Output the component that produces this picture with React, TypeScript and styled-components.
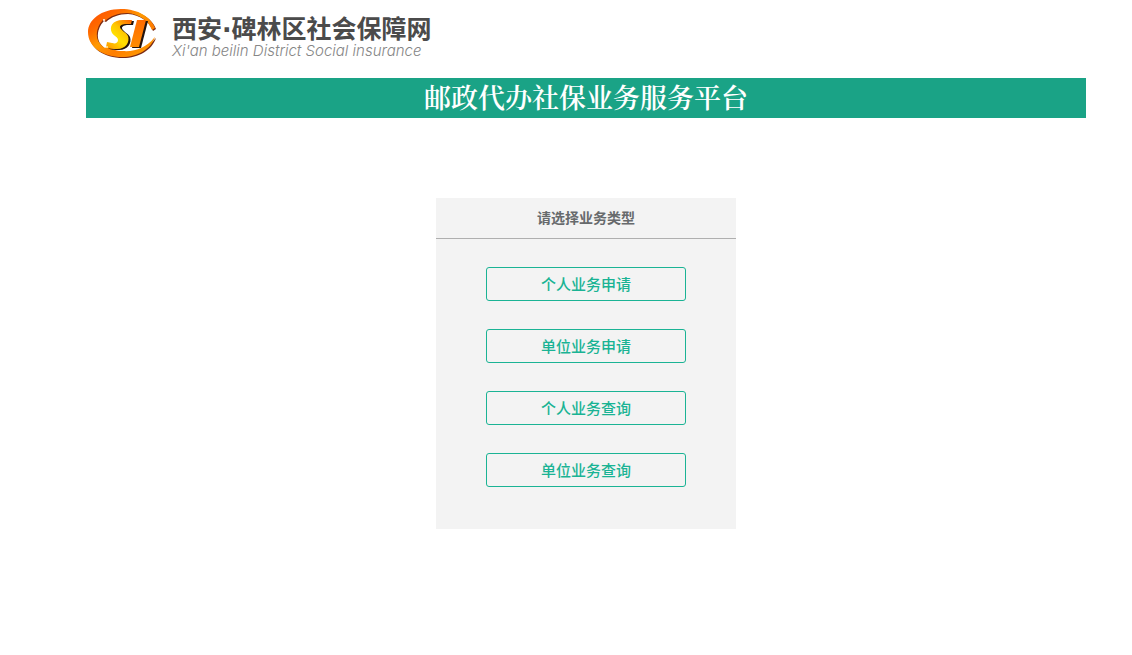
import React from "react";
import styled, { createGlobalStyle } from "styled-components";

const GlobalStyle = createGlobalStyle`
  *, *::before, *::after { box-sizing: border-box; }
  body {
    margin: 0;
    background: #fff;
    font-family: "Liberation Sans", "Noto Sans CJK SC", sans-serif;
  }
  h1, h2, p, ul { margin: 0; padding: 0; }
`;

const Page = styled.div`
  padding: 0 46px 40px 86px;
`;

const Header = styled.header`
  display: flex;
  height: 78px;
  padding: 6px 0 0;
`;

const Brand = styled.a`
  display: flex;
  align-items: flex-start;
  gap: 14px;
  color: #4b4b4b;
  text-decoration: none;
`;

const Emblem = styled.svg`
  display: block;
  width: 72px;
  height: 56px;
`;

const BrandText = styled.span`
  display: flex;
  flex-direction: column;
  padding-top: 10px;
  white-space: nowrap;
`;

const BrandName = styled.span`
  font: 700 25px/28px "DejaVu Sans", "Noto Sans CJK SC", sans-serif;
`;

const BrandLatin = styled.span`
  color: #868686;
  font: italic 300 15px/14px Inter, sans-serif;
  font-feature-settings: "cv11";
`;

const Banner = styled.h1`
  padding-top: 2px;
  background: #1aa386;
  color: #fff;
  font: 600 27px/38px "Liberation Serif", "Noto Serif CJK SC", "Noto Sans CJK SC", serif;
  text-align: center;
`;

const Panel = styled.section`
  width: 300px;
  margin: 80px auto 0;
  padding-bottom: 42px;
  background: #f3f3f3;
`;

const PanelTitle = styled.h2`
  padding-bottom: 2px;
  border-bottom: 1px solid #afafaf;
  color: #676a6c;
  font: 700 14px/38px "Noto Sans CJK SC", sans-serif;
  text-align: center;
`;

const Choices = styled.div`
  display: flex;
  flex-direction: column;
  gap: 28px;
  padding: 28px 50px 0;
`;

const Choice = styled.button`
  height: 34px;
  padding: 0;
  border: 1px solid #1ab394;
  border-radius: 3px;
  background: transparent;
  color: #1ab394;
  font: 500 15px/32px "Noto Sans CJK SC", sans-serif;
  cursor: pointer;
`;

const choices = ["个人业务申请", "单位业务申请", "个人业务查询", "单位业务查询"];

function Logo() {
  return (
    <Emblem viewBox="0 0 72 56" aria-hidden="true">
      <defs>
        <linearGradient id="ring" x1="0" y1="0" x2="1" y2="1">
          <stop offset="0" stopColor="#ff4a00" />
          <stop offset="0.25" stopColor="#ff6a00" />
          <stop offset="0.45" stopColor="#ff9a00" />
          <stop offset="0.65" stopColor="#ff7d00" />
          <stop offset="1" stopColor="#ffa800" />
        </linearGradient>
        <linearGradient id="ess" x1="0.9" y1="0" x2="0.1" y2="1">
          <stop offset="0" stopColor="#ff6a00" />
          <stop offset="0.35" stopColor="#ffc400" />
          <stop offset="0.6" stopColor="#ffe000" />
          <stop offset="1" stopColor="#ff9a00" />
        </linearGradient>
        <linearGradient id="bar" x1="0" y1="0" x2="0" y2="1">
          <stop offset="0" stopColor="#ff6a00" />
          <stop offset="1" stopColor="#ff8c00" />
        </linearGradient>
        <path id="ringShape" d="M69 22 C65 11 52 3 35 3 C15 3 2 14 2 26 C2 41 17 51 36 51 C52 51 65 43 69 31 L68 32 C61 41 49 46 37 45 C30 45 25 43 22 40 L19 42 C13 38 10 33 11 26 C12 20 15 16 17 14 L19 15 C24 10 32 7 41 7 C53 8 62 14 66 24 Z" />
        <path id="essShape" d="M46 14 L37 14 C26 14 23 21 26 27 C28 30 32 31 32 34 C32 37 29 38 26 37 L21 36 L20 41 C23 43 27 43 31 43 C40 43 44 36 42 30 C40 26 34 24 34 21 C34 19 37 18 40 18 L45 18 Z" />
        <path id="barShape" d="M51 14 L60 14 L53 41 L44 41 Z" />
      </defs>
      <use href="#ringShape" x="1" y="1" fill="#7a2a14" />
      <use href="#ringShape" fill="url(#ring)" />
      <use href="#essShape" x="2" y="1" fill="#24130c" />
      <use href="#barShape" x="2" y="1" fill="#24130c" />
      <use href="#essShape" fill="url(#ess)" />
      <use href="#barShape" fill="url(#bar)" />
      <circle cx="18" cy="14" r="1" fill="#fff" />
      <circle cx="21" cy="41" r="1" fill="#fff0b0" />
    </Emblem>
  );
}

export default function App() {
  return (
    <>
      <GlobalStyle />
      <Page>
        <Header>
          <Brand href="#">
            <Logo />
            <BrandText>
              <BrandName>西安·碑林区社会保障网</BrandName>
              <BrandLatin>Xi'an beilin District Social insurance</BrandLatin>
            </BrandText>
          </Brand>
        </Header>
        <main>
          <Banner>邮政代办社保业务服务平台</Banner>
          <Panel aria-labelledby="service-type">
            <PanelTitle id="service-type">请选择业务类型</PanelTitle>
            <Choices>
              {choices.map((label) => (
                <Choice key={label} type="button">{label}</Choice>
              ))}
            </Choices>
          </Panel>
        </main>
      </Page>
    </>
  );
}
